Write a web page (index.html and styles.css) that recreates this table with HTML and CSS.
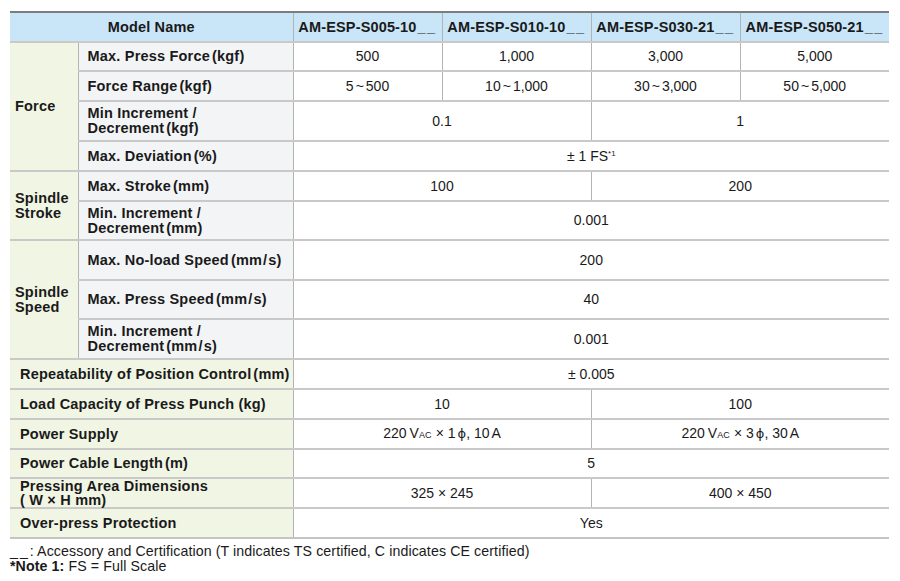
FILE: index.html
```html
<!DOCTYPE html>
<html lang="en">
<head>
<meta charset="utf-8">
<title>AM-ESP Specifications</title>
<link rel="stylesheet" href="styles.css">
</head>
<body>
<div class="page">
<table class="spec">
  <colgroup>
    <col class="c-cat"><col class="c-sub"><col class="c-val"><col class="c-val"><col class="c-val"><col class="c-val">
  </colgroup>
  <thead>
    <tr class="h30">
      <th colspan="2">Model Name</th>
      <th>AM-ESP-S005-10<span class="bl">__</span></th>
      <th>AM-ESP-S010-10<span class="bl">__</span></th>
      <th>AM-ESP-S030-21<span class="bl">__</span></th>
      <th>AM-ESP-S050-21<span class="bl">__</span></th>
    </tr>
  </thead>
  <tbody>
    <tr class="h29">
      <td class="cat" rowspan="4">Force</td>
      <td class="sub">Max. Press Force<span class="u">(kgf)</span></td>
      <td>500</td><td>1,000</td><td>3,000</td><td>5,000</td>
    </tr>
    <tr class="h30">
      <td class="sub">Force Range<span class="u">(kgf)</span></td>
      <td>5<span class="t">~</span>500</td><td>10<span class="t">~</span>1,000</td><td>30<span class="t">~</span>3,000</td><td>50<span class="t">~</span>5,000</td>
    </tr>
    <tr class="h40">
      <td class="sub">Min Increment /<br>Decrement<span class="u">(kgf)</span></td>
      <td colspan="2">0.1</td><td colspan="2">1</td>
    </tr>
    <tr class="h30">
      <td class="sub">Max. Deviation<span class="u">(%)</span></td>
      <td colspan="4">± 1 FS<sup>*1</sup></td>
    </tr>
    <tr class="h30">
      <td class="cat" rowspan="2">Spindle<br>Stroke</td>
      <td class="sub">Max. Stroke<span class="u">(mm)</span></td>
      <td colspan="2">100</td><td colspan="2">200</td>
    </tr>
    <tr class="h39">
      <td class="sub">Min. Increment /<br>Decrement<span class="u">(mm)</span></td>
      <td colspan="4">0.001</td>
    </tr>
    <tr class="h40">
      <td class="cat" rowspan="3">Spindle<br>Speed</td>
      <td class="sub">Max. No-load Speed<span class="u">(mm<span class="sl">/</span>s)</span></td>
      <td colspan="4">200</td>
    </tr>
    <tr class="h39">
      <td class="sub">Max. Press Speed<span class="u">(mm<span class="sl">/</span>s)</span></td>
      <td colspan="4">40</td>
    </tr>
    <tr class="h40">
      <td class="sub">Min. Increment /<br>Decrement<span class="u">(mm<span class="sl">/</span>s)</span></td>
      <td colspan="4">0.001</td>
    </tr>
    <tr class="h30">
      <td class="cat wide" colspan="2">Repeatability of Position Control<span class="u">(mm)</span></td>
      <td colspan="4">± 0.005</td>
    </tr>
    <tr class="h30">
      <td class="cat wide" colspan="2">Load Capacity of Press Punch (kg)</td>
      <td colspan="2">10</td><td colspan="2">100</td>
    </tr>
    <tr class="h30">
      <td class="cat wide" colspan="2">Power Supply</td>
      <td colspan="2">220<span class="v">V<span class="ac">AC</span></span> × 1<span class="phi">ϕ</span>, 10<span class="a">A</span></td>
      <td colspan="2">220<span class="v">V<span class="ac">AC</span></span> × 3<span class="phi">ϕ</span>, 30<span class="a">A</span></td>
    </tr>
    <tr class="h29">
      <td class="cat wide" colspan="2">Power Cable Length<span class="u">(m)</span></td>
      <td colspan="4">5</td>
    </tr>
    <tr class="h30">
      <td class="cat wide tight" colspan="2">Pressing Area Dimensions<br>( W × H mm)</td>
      <td colspan="2">325 × 245</td><td colspan="2">400 × 450</td>
    </tr>
    <tr class="h30">
      <td class="cat wide" colspan="2">Over-press Protection</td>
      <td colspan="4">Yes</td>
    </tr>
  </tbody>
</table>
<div class="notes">
  <p><span class="bl">__</span>: Accessory and Certification (T indicates TS certified, C indicates CE certified)</p>
  <p><b>*Note 1:</b> FS = Full Scale</p>
</div>
</div>
</body>
</html>
```
FILE: styles.css
```css
html, body {
  margin: 0;
  padding: 0;
  background: #ffffff;
}
body {
  font-family: "Liberation Sans", Arial, sans-serif;
  color: #1a1a1a;
}
.page {
  padding: 11px 12px 0 10px;
}
.spec {
  border-collapse: collapse;
  table-layout: fixed;
  width: 878px;
  font-size: 14px;
}
.c-cat { width: 68px; }
.c-sub { width: 215px; }
.c-val { width: 149px; }

.spec th,
.spec td {
  padding: 0;
  border-top: 2px solid #c9c9c9;
  border-bottom: 2px solid #c9c9c9;
  border-left: 1px solid #b3b3b3;
  border-right: 1px solid #b3b3b3;
  text-align: center;
  vertical-align: middle;
  line-height: 15px;
}
.spec tr > :first-child { border-left: none; }
.spec tr > :last-child { border-right: none; }

.spec thead th {
  background: #c9e6f8;
  border-top: 2px solid #7d7d7d;
  font-weight: bold;
  font-size: 14.5px;
  letter-spacing: 0.15px;
}
.spec tbody tr:last-child td { border-bottom: 2px solid #c4c4c4; }

.h29 { height: 29px; }
.h30 { height: 30px; }
.h39 { height: 39px; }
.h40 { height: 40px; }

.spec td.cat {
  background: #f1f5e4;
  font-weight: bold;
  text-align: left;
  padding-left: 5px;
  font-size: 14.5px;
  letter-spacing: 0.2px;
  line-height: 15px;
}
.spec td.wide {
  padding-left: 10px;
}
.spec td.tight {
  line-height: 14px;
}
.spec td.sub {
  background: #f3f4f6;
  font-weight: bold;
  text-align: left;
  padding-left: 9px;
  font-size: 14.5px;
  letter-spacing: 0.2px;
  line-height: 15px;
}
.u { margin-left: 2px; }
.sl { margin: 0 1px; }
.t { margin: 0 2px; }
.bl {
  letter-spacing: 1.5px;
  margin-left: 1px;
}
sup {
  font-size: 8px;
  vertical-align: 5px;
  line-height: 0;
}
.v { margin-left: 3px; }
.ac {
  font-size: 9px;
  letter-spacing: 0.2px;
}
.phi { margin-left: 2px; font-family: "DejaVu Sans", sans-serif; font-size: 13px; }
.a { margin-left: 2px; }

.notes {
  font-size: 14.2px;
  line-height: 15px;
  padding-top: 5px;
  letter-spacing: 0.1px;
}
.notes p { margin: 0; }
.notes .bl { margin-left: 0; letter-spacing: 2px; }
```
